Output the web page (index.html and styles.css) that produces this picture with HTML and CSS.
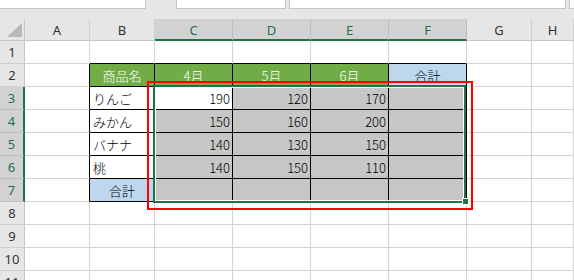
FILE: index.html
```html
<!DOCTYPE html>
<html>
<head>
    <title>Sheet</title>
    <meta name="viewport" content="width=device-width, initial-scale=1.0">
    <link rel="stylesheet" href="styles.css">
</head>
<body>
    <!-- name box / formula bar, cut off at the top -->
    <div class="toolbar">
        <div class="box name-box"></div>
        <div class="box buttons-box"></div>
        <div class="box formula-box"></div>
        <div class="box extra-box"></div>
    </div>

    <div class="sheet">
        <div class="grid">
            <!-- column headers -->
            <div class="corner"></div>
            <div class="col-h">A</div>
            <div class="col-h">B</div>
            <div class="col-h sel">C</div>
            <div class="col-h sel">D</div>
            <div class="col-h sel">E</div>
            <div class="col-h sel">F</div>
            <div class="col-h">G</div>
            <div class="col-h">H</div>

            <!-- row 1 -->
            <div class="row-h">1</div>
            <div class="cell"></div>
            <div class="cell edge-b"></div>
            <div class="cell edge-b"></div>
            <div class="cell edge-b"></div>
            <div class="cell edge-b"></div>
            <div class="cell edge-b"></div>
            <div class="cell"></div>
            <div class="cell"></div>

            <!-- row 2 -->
            <div class="row-h">2</div>
            <div class="cell edge-r"></div>
            <div class="cell t hd ctr">商品名</div>
            <div class="cell t hd ctr">4月</div>
            <div class="cell t hd ctr">5月</div>
            <div class="cell t hd ctr">6月</div>
            <div class="cell t sum ctr">合計</div>
            <div class="cell"></div>
            <div class="cell"></div>

            <!-- row 3 -->
            <div class="row-h sel">3</div>
            <div class="cell edge-r"></div>
            <div class="cell t lft">りんご</div>
            <div class="cell t num">190</div>
            <div class="cell t num shade">120</div>
            <div class="cell t num shade">170</div>
            <div class="cell t shade"></div>
            <div class="cell"></div>
            <div class="cell"></div>

            <!-- row 4 -->
            <div class="row-h sel">4</div>
            <div class="cell edge-r"></div>
            <div class="cell t lft">みかん</div>
            <div class="cell t num shade">150</div>
            <div class="cell t num shade">160</div>
            <div class="cell t num shade">200</div>
            <div class="cell t shade"></div>
            <div class="cell"></div>
            <div class="cell"></div>

            <!-- row 5 -->
            <div class="row-h sel">5</div>
            <div class="cell edge-r"></div>
            <div class="cell t lft">バナナ</div>
            <div class="cell t num shade">140</div>
            <div class="cell t num shade">130</div>
            <div class="cell t num shade">150</div>
            <div class="cell t shade"></div>
            <div class="cell"></div>
            <div class="cell"></div>

            <!-- row 6 -->
            <div class="row-h sel">6</div>
            <div class="cell edge-r"></div>
            <div class="cell t lft">桃</div>
            <div class="cell t num shade">140</div>
            <div class="cell t num shade">150</div>
            <div class="cell t num shade">110</div>
            <div class="cell t shade"></div>
            <div class="cell"></div>
            <div class="cell"></div>

            <!-- row 7 -->
            <div class="row-h sel">7</div>
            <div class="cell edge-r"></div>
            <div class="cell t sum ctr">合計</div>
            <div class="cell t shade"></div>
            <div class="cell t shade"></div>
            <div class="cell t shade"></div>
            <div class="cell t shade"></div>
            <div class="cell"></div>
            <div class="cell"></div>

            <!-- empty rows -->
            <div class="row-h">8</div>
            <div class="cell"></div><div class="cell"></div><div class="cell"></div><div class="cell"></div>
            <div class="cell"></div><div class="cell"></div><div class="cell"></div><div class="cell"></div>

            <div class="row-h">9</div>
            <div class="cell"></div><div class="cell"></div><div class="cell"></div><div class="cell"></div>
            <div class="cell"></div><div class="cell"></div><div class="cell"></div><div class="cell"></div>

            <div class="row-h">10</div>
            <div class="cell"></div><div class="cell"></div><div class="cell"></div><div class="cell"></div>
            <div class="cell"></div><div class="cell"></div><div class="cell"></div><div class="cell"></div>

            <div class="row-h">11</div>
            <div class="cell"></div><div class="cell"></div><div class="cell"></div><div class="cell"></div>
            <div class="cell"></div><div class="cell"></div><div class="cell"></div><div class="cell"></div>
        </div>

        <!-- selection C3:F7 and the red annotation frame -->
        <div class="selection"></div>
        <div class="fill-handle"></div>
        <div class="mark"></div>
    </div>
</body>
</html>
```

FILE: styles.css
```css
body {
    margin: 0;
    background-color: #e6e6e6;
    font-family: "Noto Sans CJK JP", "Noto Sans", sans-serif;
    font-size: 13px;
    color: #000;
    overflow: hidden;
}

.toolbar {
    display: flex;
    height: 19px;
    background-color: #e6e6e6;
}

.box {
    height: 8px;
    background-color: #fff;
    border: 1px solid #c6c6c6;
    border-top: none;
}

.name-box {
    width: 145px;
    border-left: none;
}

.buttons-box {
    width: 108px;
    margin-left: 30px;
}

.formula-box {
    width: 275px;
    margin-left: 3px;
}

.extra-box {
    flex: 1;
    margin-left: 3px;
    border-right: none;
}

.sheet {
    position: relative;
}

.grid {
    display: grid;
    grid-template-columns: 25px 65px 65px 78px 78px 78px 78px 65px 1fr;
    grid-template-rows: 22px;
    grid-auto-rows: 23px;
    background-color: #fff;
}

.corner,
.col-h,
.row-h {
    background-color: #e6e6e6;
    box-sizing: border-box;
    display: flex;
    align-items: center;
    justify-content: center;
    font-family: "Noto Sans", sans-serif;
    font-size: 13px;
    color: #333;
}

.corner {
    position: relative;
    border-right: 1px solid #c6c6c6;
    border-bottom: 1px solid #c6c6c6;
}

.corner::after {
    content: "";
    position: absolute;
    left: 7px;
    top: 4px;
    width: 15px;
    height: 14px;
    background-color: #b9b9b9;
    clip-path: polygon(100% 0, 100% 100%, 0 100%);
}

.col-h {
    border-right: 1px solid #cfcfcf;
    border-bottom: 1px solid #c6c6c6;
    padding-top: 1px;
}

.col-h.sel {
    background-color: #d2d2d2;
    color: #217346;
    border-right-color: #bdbdbd;
    border-bottom: 2px solid #217346;
}

.row-h {
    border-right: 1px solid #c6c6c6;
    border-bottom: 1px solid #cfcfcf;
}

.row-h.sel {
    background-color: #d2d2d2;
    color: #217346;
    border-bottom-color: #bdbdbd;
    border-right: 2px solid #217346;
}

.cell {
    box-sizing: border-box;
    border-right: 1px solid #d4d4d4;
    border-bottom: 1px solid #d4d4d4;
    display: flex;
    align-items: center;
    white-space: nowrap;
    font-weight: 300;
}

.edge-b {
    border-bottom-color: #000;
}

.edge-r {
    border-right-color: #000;
}

.t {
    border-right-color: #000;
    border-bottom-color: #000;
}

.hd {
    background-color: #70ad47;
    color: #fff;
}

.sum {
    background-color: #bdd7ee;
}

.ctr {
    justify-content: center;
}

.lft {
    padding-left: 3px;
}

.num {
    justify-content: flex-end;
    padding-right: 2px;
}

.shade {
    background-color: #c6c6c6;
    background-image: radial-gradient(#cecece 0.6px, transparent 0.8px);
    background-size: 4px 4px;
}

.selection {
    position: absolute;
    left: 153px;
    top: 66px;
    width: 313px;
    height: 118px;
    box-sizing: border-box;
    border: 2px solid #217346;
    box-shadow: inset 0 0 0 1px #fff;
}

.fill-handle {
    position: absolute;
    left: 462px;
    top: 179px;
    width: 5px;
    height: 5px;
    background-color: #217346;
    border: 1px solid #fff;
}

.mark {
    position: absolute;
    left: 147px;
    top: 62px;
    width: 326px;
    height: 129px;
    box-sizing: border-box;
    border: 2px solid #ff0000;
}
```
